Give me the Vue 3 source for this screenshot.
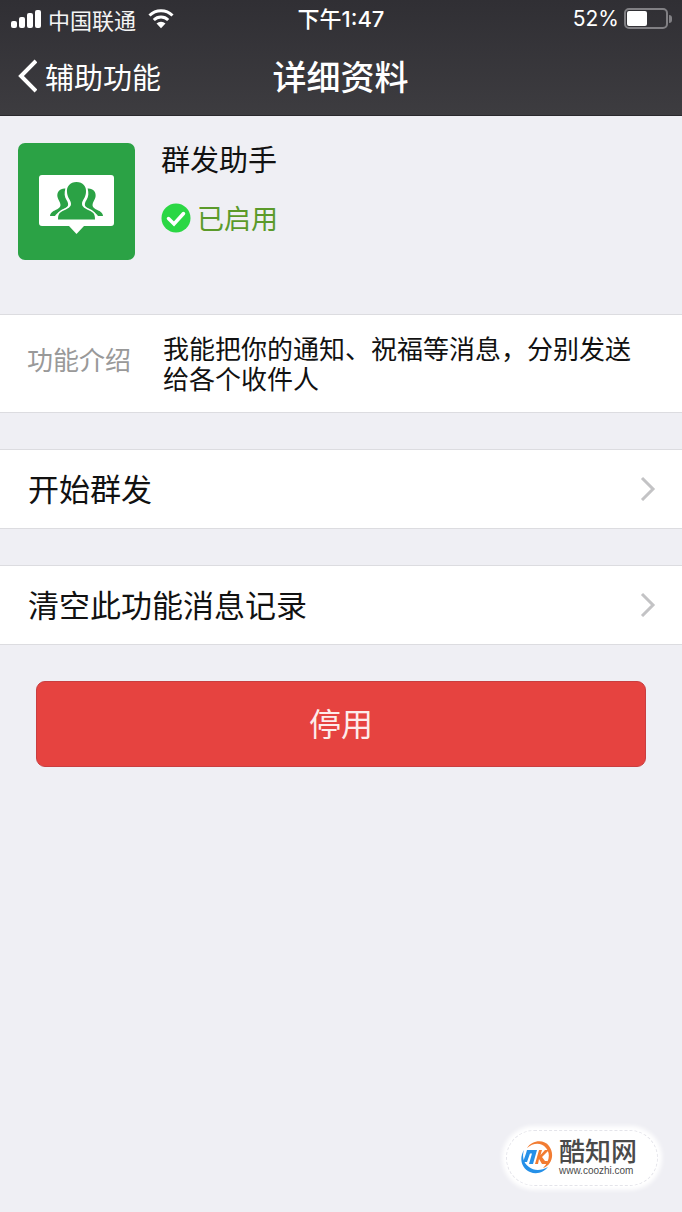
<script setup>
const actions = ['开始群发', '清空此功能消息记录']
const battery = 52
</script>

<template>
  <div class="page">
    <header class="top">
      <div class="status">
        <div class="carrier">
          <svg class="signal" width="32" height="20" viewBox="0 0 32 20" aria-hidden="true">
            <rect x="1" y="12" width="6" height="7" rx="2" />
            <rect x="9" y="8" width="6" height="11" rx="2" />
            <rect x="17" y="4" width="6" height="15" rx="2" />
            <rect x="25" y="1" width="6" height="18" rx="2" />
          </svg>
          <span>中国联通</span>
          <svg class="wifi" width="26" height="20" viewBox="0 0 26 20" aria-hidden="true">
            <path d="M1.500 6.500a16.200 16.200 0 0 1 23 0" />
            <path d="M5.800 11a10.200 10.200 0 0 1 14.400 0" />
            <path class="dot" d="M8.500 14.600a6.300 6.300 0 0 1 9 0L13 19.200z" />
          </svg>
        </div>
        <span class="time">下午1:47</span>
        <div class="power">
          <span>{{ battery }}%</span>
          <span class="battery"><span class="charge" :style="{ width: battery + '%' }"></span></span>
          <span class="cap"></span>
        </div>
      </div>
      <nav class="nav">
        <button class="back" type="button">
          <svg width="20" height="34" viewBox="0 0 20 34" aria-hidden="true">
            <path d="M19 2L4 17L19 32" />
          </svg>
          <span>辅助功能</span>
        </button>
        <h1>详细资料</h1>
      </nav>
    </header>

    <main>
      <section class="profile">
        <svg class="avatar" width="117" height="117" viewBox="0 0 117 117" aria-hidden="true">
          <rect width="117" height="117" rx="7" fill="#2ba245" />
          <path d="M24 32H93Q96 32 96 35V80Q96 83 93 83H66L58.500 91L51 83H24Q21 83 21 80V35Q21 32 24 32Z" fill="#fff" />
          <g fill="#2ba245">
            <path d="M47.500 45.500C42 45 38.500 49 39.500 54C40 57 42.500 59 42.500 62C42.500 65 39 66.500 35.500 68C33 69.500 32 71.500 32 73H37C39 69.500 44 67.500 48 65C51 63 50.500 60 48.500 57C46.500 54 46 50 47.500 45.500Z" />
            <path d="M69.500 45.500C75 45 78.500 49 77.500 54C77 57 74.500 59 74.500 62C74.500 65 78 66.500 81.500 68C84 69.500 85 71.500 85 73H80C78 69.500 73 67.500 69 65C66 63 66.500 60 68.500 57C70.500 54 71 50 69.500 45.500Z" />
            <path d="M58.500 39C52 39 48.500 43.500 49 49C49.200 55 53 57 53 61C53 65 47 66.500 43 69C40.500 70.500 40 73 40 76.500H77C77 73 76.500 70.500 74 69C70 66.500 64 65 64 61C64 57 67.800 55 68 49C68.500 43.500 65 39 58.500 39Z" stroke="#fff" stroke-width="3" />
            <path d="M58.500 39C52 39 48.500 43.500 49 49C49.200 55 53 57 53 61C53 65 47 66.500 43 69C40.500 70.500 40 73 40 76.500H77C77 73 76.500 70.500 74 69C70 66.500 64 65 64 61C64 57 67.800 55 68 49C68.500 43.500 65 39 58.500 39Z" />
          </g>
        </svg>
        <div class="info">
          <h2>群发助手</h2>
          <p class="enabled">
            <svg width="30" height="30" viewBox="0 0 30 30" aria-hidden="true">
              <circle cx="15" cy="15" r="14.500" fill="#2bd744" />
              <path d="M7.500 15.500L13 21L22.500 10.500" fill="none" stroke="#fff" stroke-width="3.500" stroke-linecap="round" />
            </svg>
            <span>已启用</span>
          </p>
        </div>
      </section>

      <dl class="intro">
        <dt>功能介绍</dt>
        <dd>我能把你的通知、祝福等消息，分别发送给各个收件人</dd>
      </dl>

      <button v-for="label in actions" :key="label" class="row" type="button">
        <span>{{ label }}</span>
        <svg width="16" height="26" viewBox="0 0 16 26" aria-hidden="true">
          <path d="M2 3L13 14L2 25" />
        </svg>
      </button>

      <div class="footer">
        <button class="disable" type="button">停用</button>
      </div>
    </main>

    <aside class="mark">
      <svg width="32" height="34" viewBox="0 0 32 34" fill="none" aria-hidden="true">
        <path d="M6 8C11 0 23-1 28 6C34 14 31 25 22 28C28 22 30 14 25 8C20 2 12 3 6 8Z" fill="#f27c32" />
        <path d="M3 10C-2 18 0 28 9 32C16 35 23 32 27 27C20 31 13 31 8 27C2 23 1 16 3 10Z" fill="#2590e8" />
        <path d="M6 10H16L12 24H8L11 13.500H9L6 22H2L5 13.500Z" fill="#2590e8" />
        <path d="M18 10H21L19.500 15L24 10H28L21 17L24 21H27L26 24H21L18 19L17 24H14Z" fill="#f27c32" />
      </svg>
      <div class="brand">
        <strong>酷知网</strong>
        <span>www.coozhi.com</span>
      </div>
    </aside>
  </div>
</template>

<style>
body {
  background: #efeff4;
}
</style>

<style scoped>
.page {
  position: relative;
  min-height: 100vh;
  background: #efeff4;
  color: #111;
  font-family: "Noto Sans CJK SC", sans-serif;
}

button {
  margin: 0;
  padding: 0;
  border: 0;
  background: none;
  color: inherit;
  font: inherit;
  cursor: pointer;
}

h1,
h2,
p,
dl,
dd {
  margin: 0;
  font-weight: 400;
}

svg {
  display: block;
  flex: none;
}

.top {
  height: 116px;
  box-sizing: border-box;
  border-bottom: 1px solid #2a292d;
  background: linear-gradient(#302f34, #3d3c40);
  color: #fff;
}

.status {
  display: grid;
  grid-template-columns: 1fr auto 1fr;
  align-items: center;
  height: 37px;
  padding: 0 10px;
  font-size: 22px;
  line-height: 36px;
}

.carrier,
.power {
  display: flex;
  align-items: center;
}

.carrier {
  color: #f4f4f4;
}

.power {
  justify-content: flex-end;
  font-family: Inter, "Noto Sans CJK SC", sans-serif;
  font-size: 21px;
}

.time {
  font-family: Inter, "Noto Sans CJK SC", sans-serif;
  font-weight: 500;
}

.signal {
  margin-right: 6px;
  fill: #fff;
}

.wifi {
  margin-left: 12px;
  fill: none;
  stroke: #fff;
  stroke-width: 3;
}

.wifi .dot {
  fill: #fff;
  stroke: none;
}

.battery {
  box-sizing: border-box;
  width: 44px;
  height: 21px;
  margin-left: 5px;
  padding: 1px;
  border: 2px solid #818084;
  border-radius: 5px;
}

.charge {
  display: block;
  height: 100%;
  background: #fff;
  border-radius: 2px;
}

.cap {
  width: 3px;
  height: 8px;
  margin-left: 1px;
  border-radius: 0 4px 4px 0;
  background: #818084;
}

.nav {
  display: grid;
  grid-template-columns: 1fr auto 1fr;
  align-items: center;
  height: 78px;
  padding: 0 18px 0 17px;
}

.back {
  display: flex;
  align-items: center;
  gap: 8px;
  font-size: 29px;
  line-height: 44px;
}

.back path {
  fill: none;
  stroke: #fff;
  stroke-width: 4;
}

h1 {
  font-size: 34px;
  font-weight: 500;
  line-height: 44px;
}

.profile {
  display: flex;
  gap: 26px;
  padding: 27px 18px 54px;
}

h2 {
  font-size: 29px;
  line-height: 30px;
}

.enabled {
  display: flex;
  align-items: center;
  gap: 6px;
  margin-top: 30px;
  color: #5b9a2a;
  font-size: 27px;
  line-height: 30px;
}

.intro {
  display: grid;
  grid-template-columns: 104px 1fr;
  align-items: center;
  gap: 32px;
  padding: 18px 28px 19px 27px;
  border: solid #dcdce0;
  border-width: 1px 0;
  background: #fff;
  font-size: 26px;
  line-height: 30px;
}

dt {
  padding-bottom: 8px;
  color: #999;
}

.row {
  display: flex;
  align-items: center;
  justify-content: space-between;
  width: 100%;
  margin-top: 36px;
  padding: 15px 26px 18px 28px;
  border: solid #dcdce0;
  border-width: 1px 0;
  background: #fff;
  font-size: 31px;
  line-height: 45px;
  text-align: left;
}

.row path {
  fill: none;
  stroke: #c3c3c5;
  stroke-width: 3;
}

.footer {
  padding: 36px;
}

.disable {
  width: 100%;
  padding-bottom: 4px;
  border: 1px solid #c93e40;
  border-radius: 9px;
  background: #e64340;
  color: #fdeceb;
  font-size: 32px;
  line-height: 80px;
}

.mark {
  position: absolute;
  right: 24px;
  bottom: 26px;
  display: flex;
  align-items: center;
  gap: 6px;
  box-sizing: border-box;
  height: 56px;
  padding: 0 20px 2px 14px;
  border: 1px dashed #e4e4ea;
  border-radius: 28px;
  background: #fff;
  box-shadow: 0 0 4px 4px #fff;
  color: #4a4a4a;
}

.brand {
  display: flex;
  flex-direction: column;
}

.brand strong {
  font-size: 26px;
  font-weight: 500;
  line-height: 26px;
}

.brand span {
  margin-top: 2px;
  font-family: "Liberation Sans", sans-serif;
  font-size: 10px;
  line-height: 12px;
}
</style>
